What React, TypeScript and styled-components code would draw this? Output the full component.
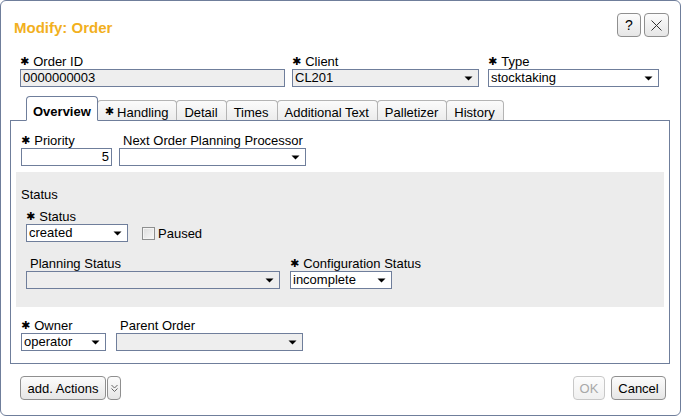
import React from 'react'
import styled, { createGlobalStyle } from 'styled-components'

const GlobalStyle = createGlobalStyle`
  body {
    margin: 0;
    background: #ffffff;
    font-family: "Liberation Sans", Arial, sans-serif;
    font-size: 13px;
    color: #000000;
  }
  * { box-sizing: border-box; }
`

const BORDER = '#6f7e9b'

const Dialog = styled.div`
  width: 681px;
  height: 416px;
  border: 1px solid ${BORDER};
  border-radius: 6px;
  display: flex;
  flex-direction: column;
  background: #ffffff;
`

const Header = styled.div`
  display: flex;
  align-items: center;
  justify-content: space-between;
  padding: 12px 11px 0 13px;
`

const Title = styled.h1`
  margin: 0;
  padding-top: 5px;
  font-size: 15px;
  font-weight: bold;
  color: #f2b01e;
`

const HeaderButtons = styled.div`
  display: flex;
  gap: 3px;
`

const Button = styled.button<{ $w?: number; $disabled?: boolean }>`
  height: 24px;
  width: ${({ $w }) => ($w ? `${$w}px` : 'auto')};
  padding: 0 6px;
  font-family: "Liberation Sans", Arial, sans-serif;
  font-size: 13px;
  color: ${({ $disabled }) => ($disabled ? '#a8a8a8' : '#000')};
  border: 1px solid ${({ $disabled }) => ($disabled ? '#c8c8c8' : '#8f8f8f')};
  border-radius: 4px;
  background: ${({ $disabled }) =>
    $disabled
      ? 'linear-gradient(#fdfdfd, #f0f0f0)'
      : 'linear-gradient(#fcfcfc, #e6e6e6)'};
  display: flex;
  align-items: center;
  justify-content: center;
`

const Fields = styled.div<{ $gap?: number; $pl?: number }>`
  display: flex;
  align-items: flex-end;
  gap: ${({ $gap }) => $gap ?? 8}px;
  padding-left: ${({ $pl }) => $pl ?? 0}px;
`

const TopFields = styled(Fields)`
  margin-top: 17px;
`

const Field = styled.div<{ $w: number; $ml?: number }>`
  width: ${({ $w }) => $w}px;
  margin-left: ${({ $ml }) => $ml ?? 0}px;
  display: flex;
  flex-direction: column;
`

const Label = styled.div<{ $indent?: boolean }>`
  height: 15px;
  line-height: 15px;
  white-space: nowrap;
  padding-left: ${({ $indent }) => ($indent ? 4 : 0)}px;
`

const Star = styled.span<{ $gap?: number }>`
  font-family: "DejaVu Sans", sans-serif;
  font-size: 11px;
  margin-right: ${({ $gap }) => $gap ?? 4}px;
  position: relative;
  top: -1px;
`

const Control = styled.div<{ $gray?: boolean; $right?: boolean }>`
  height: 18px;
  border: 1px solid ${BORDER};
  background: ${({ $gray }) => ($gray ? '#eeeeee' : '#ffffff')};
  display: flex;
  align-items: center;
  justify-content: ${({ $right }) => ($right ? 'flex-end' : 'space-between')};
  padding: 0 0 0 2px;
  line-height: 16px;
  white-space: nowrap;
`

const ControlText = styled.span<{ $right?: boolean }>`
  padding-right: ${({ $right }) => ($right ? 2 : 0)}px;
`

const Arrow = styled.span`
  width: 19px;
  display: flex;
  justify-content: center;
  align-items: center;
`

const TabsArea = styled.div`
  margin: 9px 10px 0 9px;
  display: flex;
  flex-direction: column;
`

const TabBar = styled.div`
  display: flex;
  align-items: flex-end;
  padding-left: 16px;
  height: 24px;
`

const Tab = styled.div<{ $active?: boolean }>`
  height: ${({ $active }) => ($active ? 25 : 20)}px;
  margin-bottom: ${({ $active }) => ($active ? -1 : 0)}px;
  margin-right: -1px;
  padding: ${({ $active }) => ($active ? '6px 6px 0' : '4px 8px 0 7px')};
  border: 1px solid ${({ $active }) => ($active ? BORDER : '#b4b4b4')};
  border-bottom: ${({ $active }) => ($active ? '1px solid #ffffff' : 'none')};
  border-radius: 4px 4px 0 0;
  background: ${({ $active }) => ($active ? '#ffffff' : 'linear-gradient(#fbfbfb, #ececec)')};
  font-weight: ${({ $active }) => ($active ? 'bold' : 'normal')};
  display: flex;
  align-items: center;
  position: relative;
  z-index: ${({ $active }) => ($active ? 2 : 1)};
  white-space: nowrap;
`

const Panel = styled.div`
  border: 1px solid ${BORDER};
  padding: 12px 5px 12px 5px;
  display: flex;
  flex-direction: column;
`

const Section = styled.div`
  margin-top: 6px;
  background: #ececec;
  padding: 15px 5px 18px 5px;
  display: flex;
  flex-direction: column;
`

const SectionTitle = styled.div`
  height: 15px;
  line-height: 15px;
`

const CheckRow = styled.label`
  display: flex;
  align-items: center;
  gap: 3px;
  height: 18px;
  margin-left: 6px;
`

const CheckBox = styled.span`
  width: 13px;
  height: 13px;
  border: 1px solid #8e8f8f;
  background: linear-gradient(135deg, #dcdcdc, #f8f8f8);
  box-shadow: inset 0 0 0 1px #f4f4f4;
`

const Footer = styled.div`
  display: flex;
  justify-content: space-between;
  align-items: center;
  padding: 12px 14px 0 19px;
`

const ButtonGroup = styled.div<{ $gap: number }>`
  display: flex;
  gap: ${({ $gap }) => $gap}px;
`

const Triangle = () => (
  <svg width="9" height="5" viewBox="0 0 9 5">
    <path d="M0.5 0.5 L8.5 0.5 L4.5 4.5 Z" fill="#000" />
  </svg>
)

const Req = ({ gap }: { gap?: number }) => <Star $gap={gap}>✱</Star>

type SelectProps = { w: number; label: string; req?: boolean; value?: string; gray?: boolean; ml?: number }

function SelectField({ w, label, req, value = '', gray, ml }: SelectProps) {
  return (
    <Field $w={w} $ml={ml}>
      <Label $indent={!req}>
        {req && <Req />}
        {label}
      </Label>
      <Control $gray={gray}>
        <span>{value}</span>
        <Arrow>
          <Triangle />
        </Arrow>
      </Control>
    </Field>
  )
}

const tabs = ['Overview', 'Handling', 'Detail', 'Times', 'Additional Text', 'Palletizer', 'History']

export default function App() {
  return (
    <>
      <GlobalStyle />
      <Dialog>
        <Header>
          <Title>Modify: Order</Title>
          <HeaderButtons>
            <Button $w={24} style={{ fontSize: 14 }}>?</Button>
            <Button $w={25}>
              <svg width="11" height="11" viewBox="0 0 11 11">
                <path d="M0.5 0.5 L10.5 10.5 M10.5 0.5 L0.5 10.5" stroke="#333" strokeWidth="1" />
              </svg>
            </Button>
          </HeaderButtons>
        </Header>

        <TopFields $pl={19} $gap={0}>
          <Field $w={265}>
            <Label><Req />Order ID</Label>
            <Control $gray>0000000003</Control>
          </Field>
          <SelectField w={187} ml={7} label="Client" req value="CL201" gray />
          <SelectField w={171} ml={9} label="Type" req value="stocktaking" />
        </TopFields>

        <TabsArea>
          <TabBar>
            {tabs.map((t, i) => (
              <Tab key={t} $active={i === 0}>
                {t === 'Handling' && <Req gap={3} />}
                {t}
              </Tab>
            ))}
          </TabBar>
          <Panel>
            <Fields $pl={5} $gap={7}>
              <Field $w={91}>
                <Label><Req />Priority</Label>
                <Control $right>
                  <ControlText $right>5</ControlText>
                </Control>
              </Field>
              <SelectField w={187} label="Next Order Planning Processor" />
            </Fields>

            <Section>
              <SectionTitle>Status</SectionTitle>
              <Fields $pl={5} style={{ marginTop: 7 }}>
                <SelectField w={102} label="Status" req value="created" />
                <CheckRow>
                  <CheckBox />
                  Paused
                </CheckRow>
              </Fields>
              <Fields $pl={5} $gap={10} style={{ marginTop: 14 }}>
                <SelectField w={254} label="Planning Status" gray />
                <SelectField w={102} label="Configuration Status" req value="incomplete" />
              </Fields>
            </Section>

            <Fields $pl={5} $gap={10} style={{ marginTop: 11 }}>
              <SelectField w={85} label="Owner" req value="operator" />
              <SelectField w={187} label="Parent Order" gray />
            </Fields>
          </Panel>
        </TabsArea>

        <Footer>
          <ButtonGroup $gap={1}>
            <Button $w={86}>add. Actions</Button>
            <Button $w={14} style={{ padding: 0 }}>
              <svg width="7" height="9" viewBox="0 0 7 9">
                <path d="M0.5 1 L3.5 4 L6.5 1 M0.5 4.5 L3.5 7.5 L6.5 4.5" stroke="#666" strokeWidth="1" fill="none" />
              </svg>
            </Button>
          </ButtonGroup>
          <ButtonGroup $gap={6}>
            <Button $w={32} $disabled>OK</Button>
            <Button $w={55}>Cancel</Button>
          </ButtonGroup>
        </Footer>
      </Dialog>
    </>
  )
}
